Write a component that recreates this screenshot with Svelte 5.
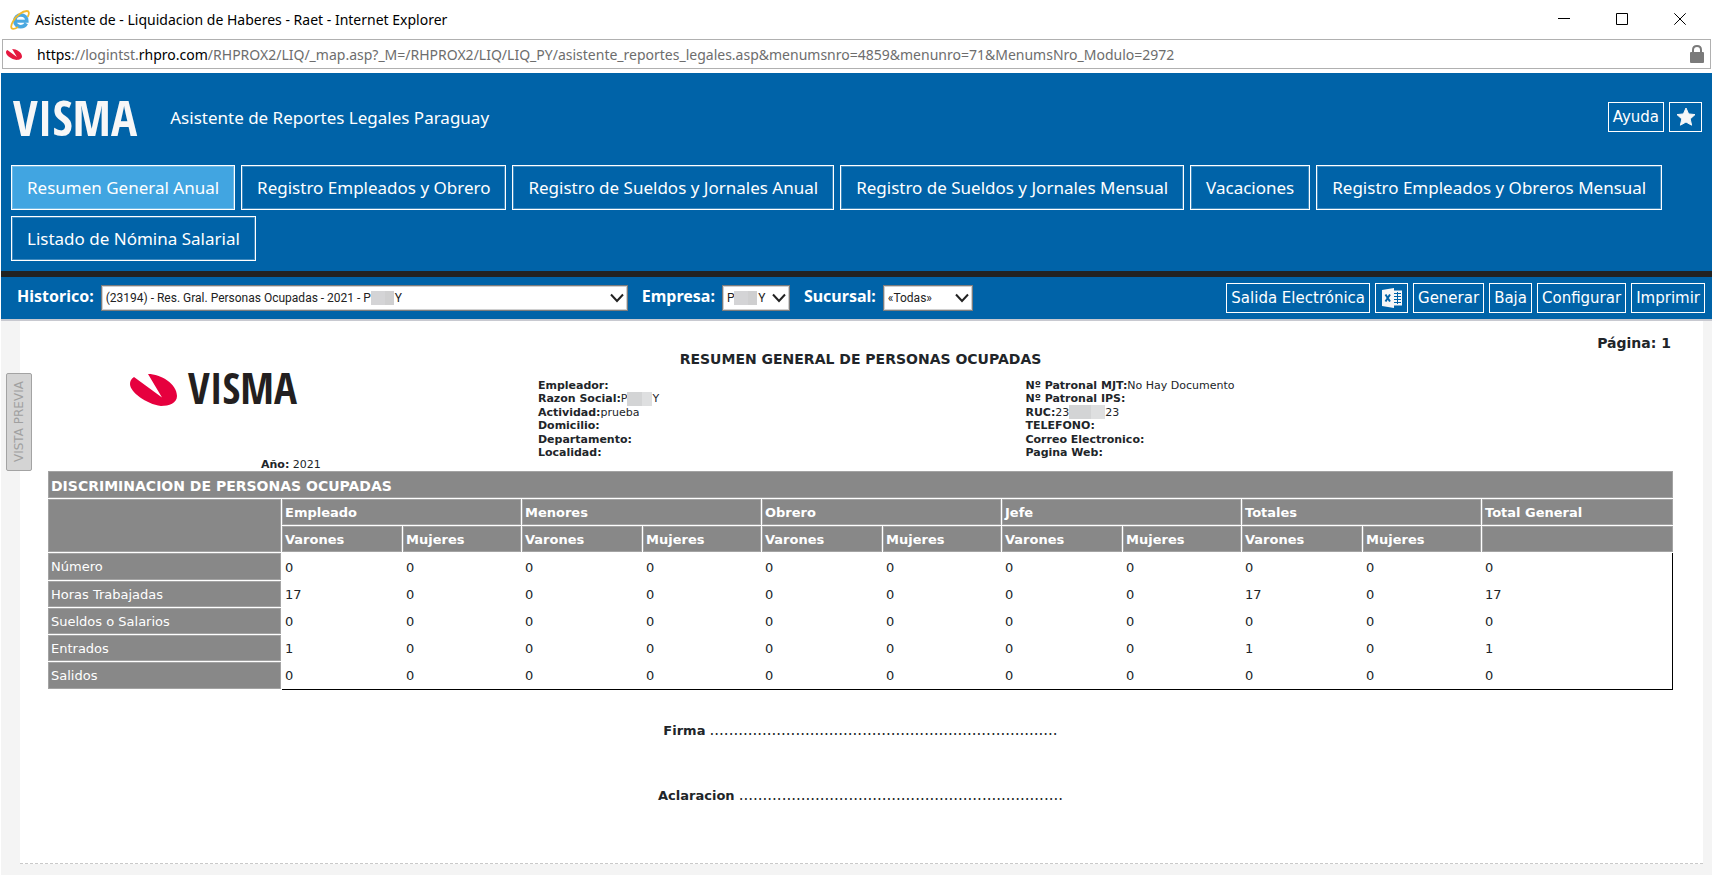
<script>
    const tabs = [
        'Resumen General Anual',
        'Registro Empleados y Obrero',
        'Registro de Sueldos y Jornales Anual',
        'Registro de Sueldos y Jornales Mensual',
        'Vacaciones',
        'Registro Empleados y Obreros Mensual',
        'Listado de Nómina Salarial'
    ];
    let active = 0;

    const gap = '\u00a0'.repeat(8);
    const groups = ['Empleado', 'Menores', 'Obrero', 'Jefe', 'Totales'];
    const rows = [
        { label: 'Número', values: [0, 0, 0, 0, 0, 0, 0, 0, 0, 0, 0] },
        { label: 'Horas Trabajadas', values: [17, 0, 0, 0, 0, 0, 0, 0, 17, 0, 17] },
        { label: 'Sueldos o Salarios', values: [0, 0, 0, 0, 0, 0, 0, 0, 0, 0, 0] },
        { label: 'Entrados', values: [1, 0, 0, 0, 0, 0, 0, 0, 1, 0, 1] },
        { label: 'Salidos', values: [0, 0, 0, 0, 0, 0, 0, 0, 0, 0, 0] }
    ];
</script>

<svelte:head>
    <title>Asistente de - Liquidacion de Haberes - Raet</title>
</svelte:head>

<div class="window">
    <div class="titlebar">
        <svg class="ie" viewBox="0 0 20 20" aria-hidden="true">
            <path d="M16.3 13.4 C15.2 15.6 13 16.8 10.8 16.8 C7.4 16.8 4.8 14.3 4.8 11 C4.8 7.6 7.4 5 10.8 5 C14.2 5 16.8 7.4 16.8 11 H6" fill="none" stroke="#4aa8e0" stroke-width="3.6" />
            <path d="M7 9.3 H14.8" stroke="#d3edfc" stroke-width="1" />
            <path d="M17.6 7 C19.6 3.4 19.2 1 16.8 1 C12.6 1 6.3 5.6 3 11.4 C0.6 15.6 0.6 18.8 3.2 18.9 C4.6 18.9 6.4 18 8 16.9" fill="none" stroke="#f2b92c" stroke-width="1.8" />
        </svg>
        <span class="title">Asistente de - Liquidacion de Haberes - Raet - Internet Explorer</span>
        <div class="controls">
            <button aria-label="Minimizar"><svg viewBox="0 0 12 12"><path d="M0 5.5 H12" /></svg></button>
            <button aria-label="Maximizar"><svg viewBox="0 0 12 12"><path d="M0.5 0.5 H11.5 V11.5 H0.5 Z" /></svg></button>
            <button aria-label="Cerrar"><svg viewBox="0 0 12 12"><path d="M0.3 0.3 L11.7 11.7 M11.7 0.3 L0.3 11.7" /></svg></button>
        </div>
    </div>

    <div class="address">
        <svg class="favicon" viewBox="0 0 47 32" aria-hidden="true">
            <path d="M4 3 L32 23.5 L18 0 C31 0 47 10 47 22 C47 29 39 32 31 32 C16 30 0 18 0 10 C0 7 1 5 4 3 Z" fill="#e5183f" />
        </svg>
        <span class="url"><b>https</b>://logintst.<b>rhpro.com</b>/RHPROX2/LIQ/_map.asp?_M=/RHPROX2/LIQ/LIQ_PY/asistente_reportes_legales.asp&amp;menumsnro=4859&amp;menunro=71&amp;MenumsNro_Modulo=2972</span>
        <svg class="lock" viewBox="0 0 14 18" aria-hidden="true">
            <path d="M3 8 V5 C3 2.6 4.6 1 7 1 C9.4 1 11 2.6 11 5 V8" fill="none" stroke="#7a7a7a" stroke-width="2" />
            <rect y="7" width="14" height="11" rx="1" fill="#7a7a7a" />
        </svg>
    </div>

    <header>
        <div class="brand">
            <span class="wordmark">VISMA</span>
            <h1>Asistente de Reportes Legales Paraguay</h1>
            <div class="actions">
                <button class="btn">Ayuda</button>
                <button class="btn icon" aria-label="Favoritos">
                    <svg viewBox="0 0 20 20">
                        <path d="M10 1 L12.6 6.9 L19 7.6 L14.2 11.9 L15.6 18.2 L10 15 L4.4 18.2 L5.8 11.9 L1 7.6 L7.4 6.9 Z" fill="#f7f7f7" stroke="#f7f7f7" stroke-linejoin="round" />
                    </svg>
                </button>
            </div>
        </div>
        <nav>
            {#each tabs as tab, i}
                <button class="tab" class:active={i === active} on:click={() => active = i}>{tab}</button>
            {/each}
        </nav>
    </header>

    <div class="toolbar">
        <label for="historico">Historico:</label>
        <div class="select historico">
            <select id="historico">
                <option>(23194) - Res. Gral. Personas Ocupadas - 2021 - P{gap}Y</option>
            </select>
            <span class="mask"></span>
            <svg viewBox="0 0 14 10"><path d="M1 1.5 L7 8 L13 1.5" /></svg>
        </div>
        <label for="empresa">Empresa:</label>
        <div class="select empresa">
            <select id="empresa">
                <option>P{gap}Y</option>
            </select>
            <span class="mask"></span>
            <svg viewBox="0 0 14 10"><path d="M1 1.5 L7 8 L13 1.5" /></svg>
        </div>
        <label for="sucursal">Sucursal:</label>
        <div class="select sucursal">
            <select id="sucursal">
                <option>«Todas»</option>
            </select>
            <svg viewBox="0 0 14 10"><path d="M1 1.5 L7 8 L13 1.5" /></svg>
        </div>
        <div class="actions">
            <button class="btn">Salida Electrónica</button>
            <button class="btn icon" aria-label="Excel">
                <svg viewBox="0 0 20 20">
                    <path d="M11 2.5 H20 V17.5 H11 Z" fill="#f7f7f7" />
                    <path d="M12 5.5 H19 M12 8.5 H19 M12 11.5 H19 M12 14.5 H19 M15.5 4 V16" stroke="#0063a8" stroke-width="1" />
                    <path d="M0 2 L12 0 V20 L0 18 Z" fill="#f7f7f7" />
                    <path d="M3.5 6.5 L8 13.5 M8 6.5 L3.5 13.5" stroke="#0063a8" stroke-width="2" />
                </svg>
            </button>
            <button class="btn">Generar</button>
            <button class="btn">Baja</button>
            <button class="btn">Configurar</button>
            <button class="btn">Imprimir</button>
        </div>
    </div>

    <main>
        <button class="preview">VISTA PREVIA</button>
        <section class="sheet">
            <p class="page">Página: 1</p>
            <h2>RESUMEN GENERAL DE PERSONAS OCUPADAS</h2>
            <div class="info">
                <div class="company">
                    <div class="logo">
                        <svg viewBox="0 0 47 32" aria-hidden="true">
                            <path d="M4 3 L32 23.5 L18 0 C31 0 47 10 47 22 C47 29 39 32 31 32 C16 30 0 18 0 10 C0 7 1 5 4 3 Z" fill="#e6003e" />
                        </svg>
                        <span>VISMA</span>
                    </div>
                    <p class="year"><b>Año:</b> 2021</p>
                </div>
                <ul>
                    <li><b>Empleador:</b></li>
                    <li><b>Razon Social:</b>P<span class="hidden"></span>Y</li>
                    <li><b>Actividad:</b>prueba</li>
                    <li><b>Domicilio:</b></li>
                    <li><b>Departamento:</b></li>
                    <li><b>Localidad:</b></li>
                </ul>
                <ul>
                    <li><b>Nº Patronal MJT:</b>No Hay Documento</li>
                    <li><b>Nº Patronal IPS:</b></li>
                    <li><b>RUC:</b>23<span class="hidden wide"></span>23</li>
                    <li><b>TELEFONO:</b></li>
                    <li><b>Correo Electronico:</b></li>
                    <li><b>Pagina Web:</b></li>
                </ul>
            </div>

            <table>
                <colgroup>
                    <col class="c-label">
                    {#each groups as group}
                        <col class="c-varones">
                        <col class="c-mujeres">
                    {/each}
                    <col>
                </colgroup>
                <thead>
                    <tr><th class="caption" colspan="12">DISCRIMINACION DE PERSONAS OCUPADAS</th></tr>
                    <tr>
                        <th rowspan="2"></th>
                        {#each groups as group}
                            <th colspan="2">{group}</th>
                        {/each}
                        <th>Total General</th>
                    </tr>
                    <tr>
                        {#each groups as group}
                            <th>Varones</th>
                            <th>Mujeres</th>
                        {/each}
                        <th></th>
                    </tr>
                </thead>
                <tbody>
                    {#each rows as row}
                        <tr>
                            <th class="label">{row.label}</th>
                            {#each row.values as value}
                                <td>{value}</td>
                            {/each}
                        </tr>
                    {/each}
                </tbody>
            </table>

            <p class="sign"><b>Firma</b> <span>{'.'.repeat(73)}</span></p>
            <p class="sign"><b>Aclaracion</b> <span>{'.'.repeat(68)}</span></p>
        </section>
    </main>
</div>

<style>
    :global(body) {
        background: #fff;
    }
    .window {
        box-sizing: border-box;
        min-height: 100vh;
        display: flex;
        flex-direction: column;
        padding-left: 1px;
        font-family: 'DejaVu Sans', Verdana, sans-serif;
        color: #212529;
    }
    button, select {
        font-family: inherit;
        color: inherit;
        margin: 0;
    }
    h1, h2, p, ul {
        margin: 0;
        padding: 0;
    }

    .titlebar {
        display: flex;
        align-items: center;
        height: 39px;
        padding: 0 3px 0 9px;
        font: 14px 'Noto Sans', sans-serif;
        color: #000;
    }
    .ie {
        width: 20px;
        height: 20px;
        margin-right: 5px;
    }
    .controls {
        display: flex;
        margin-left: auto;
    }
    .controls button {
        width: 58px;
        height: 38px;
        padding: 0;
        border: 0;
        background: none;
    }
    .controls svg {
        width: 12px;
        height: 12px;
        fill: none;
        stroke: #000;
        overflow: visible;
    }

    .address {
        display: flex;
        align-items: center;
        box-sizing: border-box;
        height: 30px;
        margin: 0 1px 4px;
        padding: 0 6px 0 3px;
        border: 1px solid #b0b0b0;
        font: 14px 'Noto Sans', sans-serif;
        color: #6d6d6d;
    }
    .favicon {
        width: 16px;
        height: 11px;
    }
    .url {
        flex: 1;
        padding-left: 15px;
        white-space: nowrap;
        overflow: hidden;
    }
    .url b {
        font-weight: normal;
        color: #000;
    }
    .lock {
        width: 14px;
        height: 18px;
    }

    header {
        background: #0063a8;
        color: #fff;
        padding: 0 10px 10px;
        border-bottom: 6px solid #222;
    }
    .brand {
        display: flex;
        align-items: center;
        height: 88px;
        padding-bottom: 4px;
    }
    .wordmark {
        margin-left: 2px;
        font: bold 49px/60px 'Open Sans Condensed', 'Open Sans', sans-serif;
        color: #f7f7f7;
    }
    h1 {
        margin-left: 33px;
        font: 17px 'Noto Sans', sans-serif;
    }
    .actions {
        display: flex;
        gap: 5px;
        margin-left: auto;
    }
    .btn {
        box-sizing: border-box;
        height: 30px;
        padding: 0 4px;
        border: 1px solid #fff;
        background: #0063a8;
        color: #fff;
        font-size: 15px;
        white-space: nowrap;
    }
    .icon {
        width: 33px;
        padding: 0;
    }
    .icon svg {
        display: block;
        width: 20px;
        height: 20px;
        margin: 0 auto;
    }
    nav {
        display: flex;
        flex-wrap: wrap;
        gap: 6px;
    }
    .tab {
        box-sizing: border-box;
        height: 45px;
        padding: 0 15px;
        border: 1px solid #fff;
        box-shadow: inset 0 0 0 1px rgba(255, 255, 255, 0.25);
        background: #0063a8;
        color: #fff;
        font: 17px 'Noto Sans', sans-serif;
    }
    .tab.active {
        background: #41a5e1;
    }

    .toolbar {
        display: flex;
        align-items: center;
        height: 42px;
        padding: 0 7px 0 16px;
        border-bottom: 2px solid #c8c9d0;
        background: #0063a8;
    }
    .toolbar label {
        padding-bottom: 5px;
        color: #fff;
        font: bold 16px 'Noto Sans', sans-serif;
    }
    .select {
        position: relative;
        margin: 0 14px 0 7px;
    }
    .select select {
        box-sizing: border-box;
        display: block;
        width: 100%;
        height: 26px;
        padding: 0 4px;
        border: 1px solid #7c7c7c;
        border-radius: 0;
        box-shadow: inset 0 0 0 1px #d0d0d0;
        background: #fff;
        appearance: none;
        font: 12px Roboto, sans-serif;
        color: #222;
    }
    .select svg {
        position: absolute;
        right: 4px;
        top: 8px;
        width: 14px;
        height: 10px;
        fill: none;
        stroke: #222;
        stroke-width: 2;
        pointer-events: none;
    }
    .historico {
        width: 527px;
    }
    .empresa {
        width: 68px;
    }
    .sucursal {
        width: 90px;
    }
    .mask {
        position: absolute;
        top: 6px;
        width: 23px;
        height: 14px;
        background: linear-gradient(90deg, #d4d4d6 60%, #cfcfd0 60%);
        pointer-events: none;
    }
    .historico .mask {
        left: 270px;
    }
    .empresa .mask {
        left: 12px;
    }

    main {
        position: relative;
        flex: 1;
        padding: 0 9px 11px 19px;
        background: #f4f4f4;
    }
    .preview {
        position: absolute;
        left: 5px;
        top: 52px;
        width: 26px;
        height: 98px;
        padding: 0;
        border: 1px solid #a3a3a3;
        border-radius: 2px;
        background: #d4d4d4;
        color: #a0a0a0;
        font-size: 12px;
        writing-mode: vertical-rl;
        transform: rotate(180deg);
    }
    .sheet {
        padding: 13px 30px 59px 28px;
        border-bottom: 1px dashed #c9c9c9;
        background: #fff;
    }
    .page {
        padding-right: 2px;
        text-align: right;
        font-size: 14px;
        font-weight: bold;
        line-height: 18px;
    }
    h2 {
        text-align: center;
        font-size: 14px;
        line-height: 14px;
    }
    .info {
        display: grid;
        grid-template-columns: 30.15% 30% 1fr;
        height: 105px;
        font-size: 11px;
        line-height: 13px;
    }
    .company {
        display: flex;
        flex-direction: column;
        justify-content: space-between;
        padding-top: 8px;
    }
    .logo {
        display: flex;
        align-items: center;
        gap: 11px;
        height: 32px;
        padding-left: 82px;
    }
    .logo svg {
        width: 47px;
        height: 32px;
    }
    .logo span {
        padding-bottom: 4px;
        font: bold 43px/32px 'Open Sans Condensed', 'Open Sans', sans-serif;
        color: #231f20;
    }
    .year {
        padding-left: 213px;
    }
    ul {
        display: flex;
        flex-direction: column;
        justify-content: space-between;
        height: 80px;
        padding-top: 13px;
        list-style: none;
    }
    li {
        display: flex;
        align-items: center;
        height: 13px;
    }
    .hidden {
        width: 25px;
        height: 14px;
        background: linear-gradient(90deg, #d3d4d5 60%, #dedfe0 60%);
    }
    .hidden.wide {
        width: 36px;
    }

    table {
        width: 100%;
        table-layout: fixed;
        border-spacing: 0;
        font-size: 13px;
        line-height: 16px;
    }
    .c-label {
        width: 14.4%;
    }
    .c-varones {
        width: 7.45%;
    }
    .c-mujeres {
        width: 7.32%;
    }
    th, td {
        box-sizing: border-box;
        height: 27px;
        padding: 1px 3px 0;
        text-align: left;
    }
    th {
        border-right: 1px solid #fff;
        border-bottom: 1px solid #fff;
        box-shadow: inset 0 0 0 1px #a3a3a3;
        background: #888;
        background-clip: padding-box;
        color: #fff;
    }
    thead th {
        padding-top: 2px;
    }
    thead th:last-child {
        border-right: 0;
    }
    .caption {
        height: 28px;
        font-size: 14px;
    }
    .label {
        font-weight: normal;
    }
    tbody tr:first-child td, tbody tr:last-child td {
        height: 28px;
    }
    td:last-child {
        border-right: 1px solid #000;
    }
    tbody tr:last-child td {
        border-bottom: 1px solid #000;
    }

    .sign {
        margin-top: 48px;
        text-align: center;
        font-size: 13px;
        line-height: 16px;
    }
    table + .sign {
        margin-top: 32px;
    }
    .sign span {
        font-size: 15px;
    }
</style>
